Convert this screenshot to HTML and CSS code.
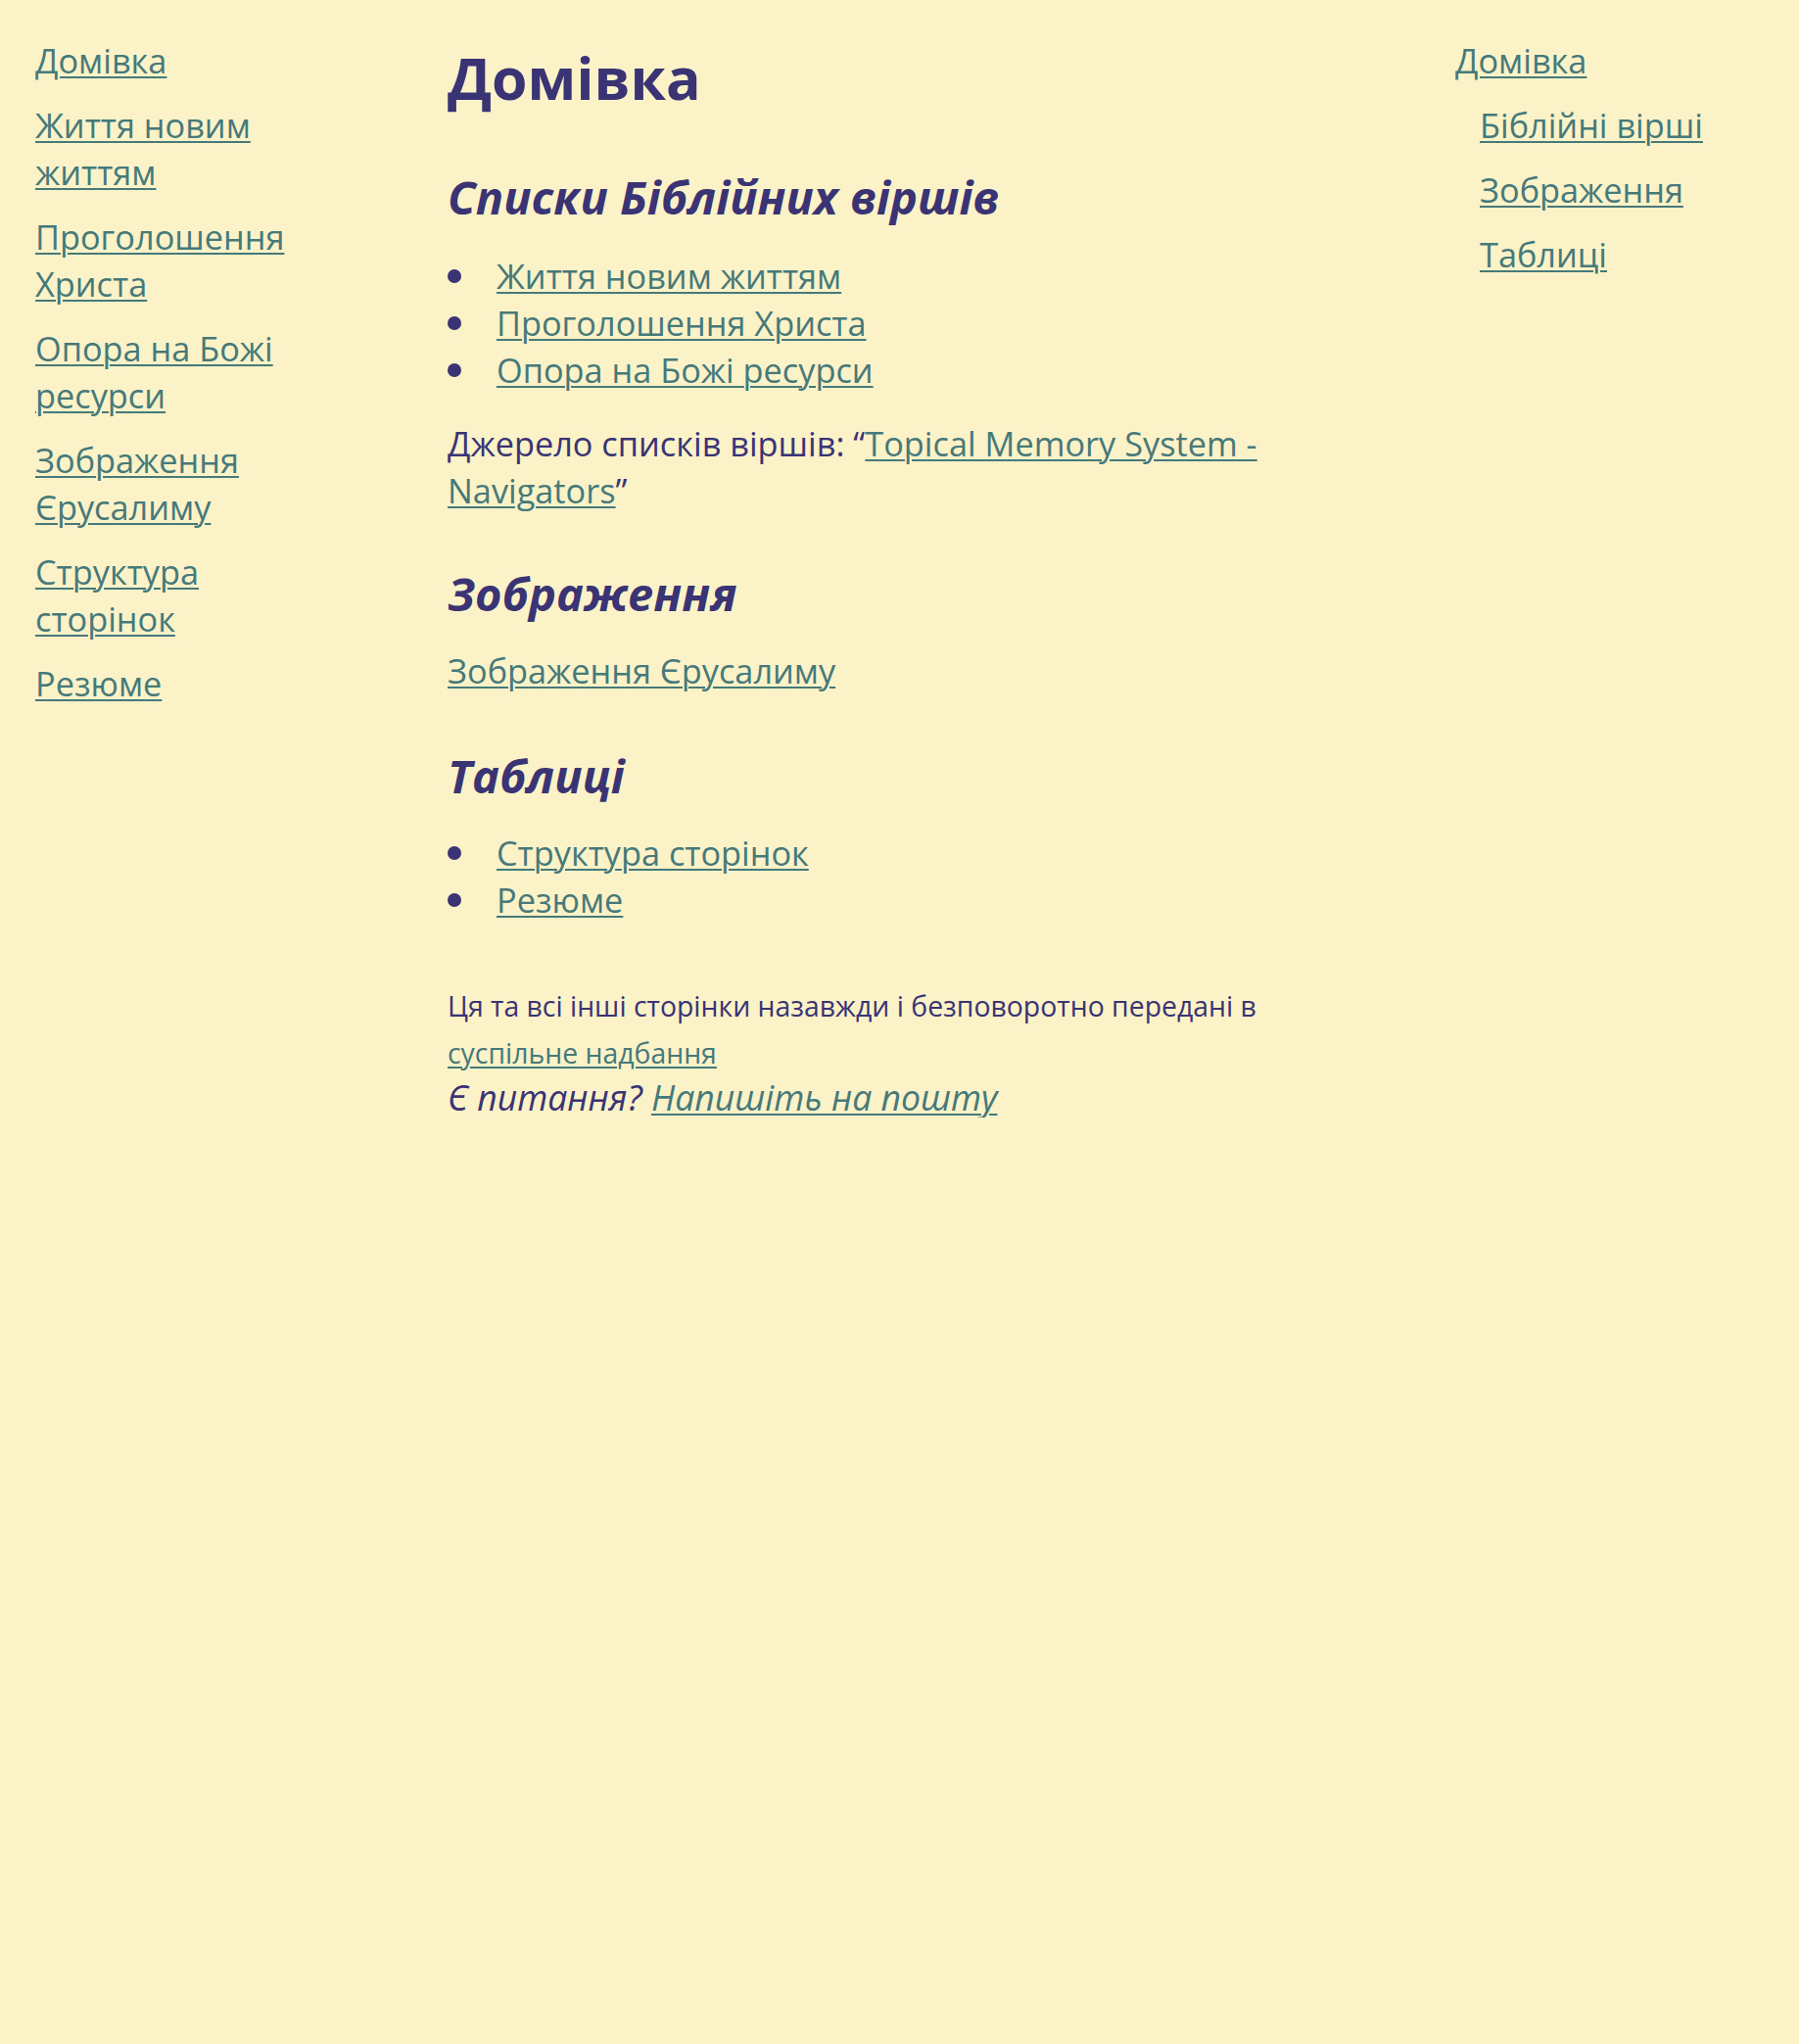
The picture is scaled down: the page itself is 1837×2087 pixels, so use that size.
FILE: index.html
```html
<!DOCTYPE html>
<html lang="uk">
<head>
<meta charset="utf-8">
<title>Домівка</title>
<link rel="stylesheet" href="styles.css">
</head>
<body>
<div class="layout">
  <nav class="sidenav">
    <ul class="navlist">
      <li><a href="#">Домівка</a></li>
      <li><a href="#">Життя новим життям</a></li>
      <li><a href="#">Проголошення Христа</a></li>
      <li><a href="#">Опора на Божі ресурси</a></li>
      <li><a href="#">Зображення Єрусалиму</a></li>
      <li><a href="#">Структура сторінок</a></li>
      <li><a href="#">Резюме</a></li>
    </ul>
  </nav>
  <main class="content">
    <h1 class="title">Домівка</h1>
    <h2 class="section">Списки Біблійних віршів</h2>
    <ul class="bullets">
      <li><a href="#">Життя новим життям</a></li>
      <li><a href="#">Проголошення Христа</a></li>
      <li><a href="#">Опора на Божі ресурси</a></li>
    </ul>
    <p class="text">Джерело списків віршів: “<a href="#">Topical Memory System - Navigators</a>”</p>
    <h2 class="section">Зображення</h2>
    <p class="text"><a href="#">Зображення Єрусалиму</a></p>
    <h2 class="section">Таблиці</h2>
    <ul class="bullets">
      <li><a href="#">Структура сторінок</a></li>
      <li><a href="#">Резюме</a></li>
    </ul>
    <footer class="foot">
      <p class="license">Ця та всі інші сторінки назавжди і безповоротно передані в <a href="#">суспільне надбання</a></p>
      <p class="contact">Є питання? <a href="#">Напишіть на пошту</a></p>
    </footer>
  </main>
  <aside class="toc">
    <ul class="toclist">
      <li><a href="#">Домівка</a>
        <ul class="tocsub">
          <li><a href="#">Біблійні вірші</a></li>
          <li><a href="#">Зображення</a></li>
          <li><a href="#">Таблиці</a></li>
        </ul>
      </li>
    </ul>
  </aside>
</div>
</body>
</html>
```
FILE: styles.css
```css
html, body {
  margin: 0;
  padding: 0;
  background: #fbf2c8;
}
body {
  font-family: "Open Sans", "Noto Sans", sans-serif;
  color: #3a3374;
}
a {
  color: #46797a;
  text-decoration: underline;
  text-decoration-thickness: 2px;
  text-underline-offset: 3px;
}
.layout {
  display: grid;
  grid-template-columns: 300px 908px 315px;
  column-gap: 121px;
  padding: 38px 36px 0 36px;
}
.navlist, .toclist, .tocsub {
  list-style: none;
  margin: 0;
  padding: 0;
}
.navlist li, .toclist > li, .tocsub li {
  font-size: 34.3px;
  line-height: 48px;
}
.navlist li + li, .tocsub li {
  margin-top: 18px;
}
.tocsub {
  padding-left: 25px;
}
.content {
  font-size: 34.3px;
  line-height: 48px;
}
.title {
  font-size: 59px;
  line-height: 70px;
  margin: 6px 0 59px;
  font-weight: 700;
}
.section {
  font-size: 47px;
  line-height: 56px;
  font-style: italic;
  font-weight: 700;
  margin: 57px 0 27px;
}
.section:nth-of-type(2) {
  margin-top: 53px;
}
.section:nth-of-type(3) {
  margin-top: 55px;
}
.bullets {
  list-style: none;
  margin: 0;
  padding: 0;
}
.bullets:first-of-type {
  margin-top: 29px;
}
.bullets li {
  display: flex;
  align-items: center;
}
.bullets li::before {
  content: "";
  flex: none;
  width: 14px;
  height: 14px;
  border-radius: 50%;
  background: #3a3374;
  margin: 0 36px 0 0;
}
.text {
  margin: 27px 0 0;
}
.foot {
  margin-top: 60px;
}
.license {
  margin: 0;
  font-size: 28.4px;
  line-height: 48px;
}
.contact {
  margin: 0;
  font-size: 35.6px;
  font-style: italic;
  line-height: 42px;
}
```
